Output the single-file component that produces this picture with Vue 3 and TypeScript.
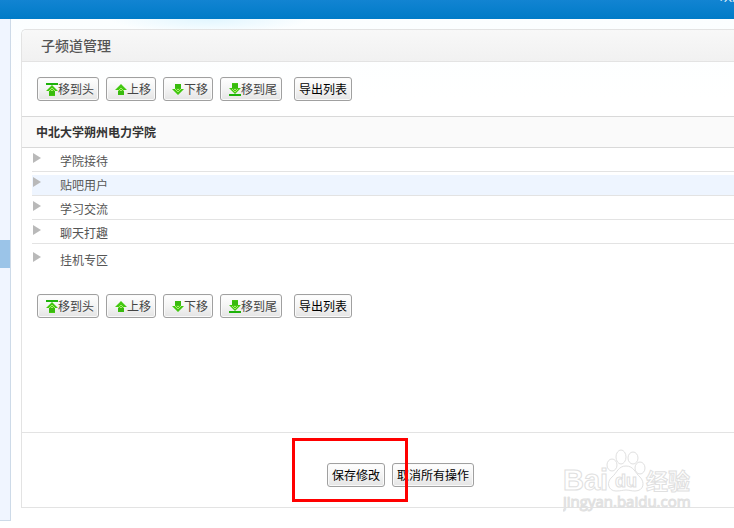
<script setup lang="ts">
import { ref } from 'vue'

type IconName = 'top' | 'up' | 'down' | 'bottom'

interface MoveAction {
  label: string
  icon: IconName
}

const moves: MoveAction[] = [
  { label: '移到头', icon: 'top' },
  { label: '上移', icon: 'up' },
  { label: '下移', icon: 'down' },
  { label: '移到尾', icon: 'bottom' },
]

const arrowPaths: Record<IconName, string> = {
  top: 'M6 2L12 8H9V13H3V8H0Z',
  up: 'M6 1L12 7H9V12H3V7H0Z',
  down: 'M3 1H9V6H12L6 12L0 6H3Z',
  bottom: 'M3 0H9V5H12L6 11L0 5H3Z',
}

const channels: string[] = ['学院接待', '贴吧用户', '学习交流', '聊天打趣', '挂机专区']
const toolbars: string[] = ['above', 'below']
const selected = ref(1)
</script>

<template>
  <div class="page">
    <header class="topbar"><span class="account">欢迎</span></header>
    <div class="body">
      <aside class="sidebar"><a class="current" href="#" aria-label="子频道管理"></a></aside>
      <main class="panel">
        <h1 class="title">子频道管理</h1>
        <template v-for="place in toolbars" :key="place">
          <div class="toolbar" :class="place">
            <button v-for="move in moves" :key="move.icon" type="button" class="btn move" :class="move.icon">
              <svg class="icon" viewBox="0 0 12 13" aria-hidden="true">
                <path :d="arrowPaths[move.icon]" fill="#43c811" />
                <template v-if="move.icon === 'top' || move.icon === 'up'">
                  <path d="M3 8H9V12H3Z" fill="#2aa50b" opacity="0.4" />
                  <path d="M5 5.5h2M3 7.5h1M5 7.5h2M8 7.5h1M4 6.5h1M7 6.5h1" stroke="#a5ec6c" />
                </template>
                <template v-else>
                  <path d="M3 1H9V5H3Z" fill="#2aa50b" opacity="0.4" />
                  <path d="M3 6.5h1M5 6.5h2M8 6.5h1M4 7.5h1M7 7.5h1M5 8.5h2" stroke="#a5ec6c" />
                </template>
                <path v-if="move.icon === 'top'" d="M0 1H12" stroke="#1db20a" stroke-width="2" />
                <path v-if="move.icon === 'bottom'" d="M0 12H12" stroke="#1db20a" stroke-width="2" />
              </svg>
              <span>{{ move.label }}</span>
            </button>
            <button type="button" class="btn export">导出列表</button>
          </div>
          <section v-if="place === 'above'">
            <h2 class="subtitle">中北大学朔州电力学院</h2>
            <ul class="channels">
              <li
                v-for="(channel, index) in channels"
                :key="channel"
                :class="{ selected: index === selected }"
                @click="selected = index"
              >
                <svg class="marker" viewBox="0 0 8 10" aria-hidden="true"><path d="M0 0L8 5L0 10Z" fill="#b9b9b9" /></svg>
                <span class="name">{{ channel }}</span>
              </li>
            </ul>
          </section>
        </template>
        <footer class="actions">
          <span class="save-wrap">
            <button type="button" class="btn">保存修改</button>
            <span class="highlight"></span>
          </span>
          <button type="button" class="btn">取消所有操作</button>
          <svg class="watermark" viewBox="0 0 136 68" role="img" aria-label="Baidu 经验">
            <g fill="#fff" stroke="#e0e0e0">
              <ellipse cx="49" cy="17" rx="5" ry="6" />
              <ellipse cx="58" cy="9" rx="5" ry="7" />
              <ellipse cx="70" cy="10" rx="5" ry="6" />
              <ellipse cx="77" cy="20" rx="5" ry="6" />
              <path d="M63 18C55 18 54 25 49 29C43 34 45 43 53 43C58 43 60 42 63 42C66 42 68 43 72 43C81 43 82 34 77 29C72 25 71 18 63 18Z" />
              <text class="latin" x="0" y="42" font-size="29">Bai</text>
              <text class="latin" x="52" y="39" font-size="18">du</text>
              <text class="han" x="83" y="41" font-size="22">经验</text>
              <text class="site" x="0" y="59" font-size="15">jingyan.baidu.com</text>
            </g>
          </svg>
        </footer>
      </main>
    </div>
  </div>
</template>

<style>
body {
  margin: 0;
  background: #fff;
}
</style>

<style scoped>
.page {
  overflow: hidden;
  font: 12px/16px "Noto Sans CJK SC", sans-serif;
  color: #555;
}
.topbar {
  height: 19px;
  background: linear-gradient(#1284d2, #007bc7);
  color: #fff;
  display: flex;
  justify-content: flex-end;
  overflow: hidden;
}
.account {
  margin: -12px -10px 0 0;
}
.body {
  display: flex;
  background: radial-gradient(ellipse 100px 14px at 210px 0, #e1f6ff, transparent), linear-gradient(#fbfeff, #fff 80px);
}
.sidebar {
  width: 10px;
  height: 501px;
  flex: none;
  background: #f0f5ff;
  border: solid #cddae8;
  border-width: 0 1px 1px 0;
}
.current {
  display: block;
  height: 28px;
  margin-top: 221px;
  background: #9bc4e8;
}
.panel {
  flex: 1;
  align-self: flex-start;
  margin: 10px 0 0 10px;
  border: 1px solid #e3e3e3;
  border-right: 0;
  border-top-left-radius: 5px;
}
.title {
  margin: 0;
  padding: 0 19px;
  height: 31px;
  border-bottom: 1px solid #e3e3e3;
  border-top-left-radius: 5px;
  background: linear-gradient(#f8f8f8, #f1f1f1);
  font-size: 14px;
  line-height: 30px;
  font-weight: 500;
}
.toolbar {
  display: flex;
  gap: 7px;
  padding: 15px;
}
.below {
  padding: 20px 15px 114px;
}
.btn {
  box-sizing: border-box;
  height: 24px;
  padding: 0 4px;
  border: 1px solid #a0a0a0;
  border-radius: 3px;
  background: linear-gradient(#fff, #f4f4f4 50%, #e4e4e4);
  box-shadow: inset 0 0 0 1px #fafafa;
  font: inherit;
  color: #000;
  white-space: nowrap;
}
.move {
  display: flex;
  align-items: center;
  justify-content: flex-end;
  width: 50px;
  color: #444;
}
.move.top,
.move.bottom {
  width: 62px;
}
.icon {
  width: 12px;
  height: 13px;
  flex: none;
}
.export {
  margin-left: 5px;
}
.subtitle {
  margin: 0;
  padding: 0 14px;
  border: solid #d9d9d9;
  border-width: 1px 0;
  background: #fafafa;
  font-size: 12px;
  line-height: 30px;
  color: #333;
}
.channels {
  list-style: none;
  margin: 0;
  padding: 3px 0 0 10px;
}
.channels li {
  display: flex;
  height: 20px;
  margin-bottom: 3px;
  border-bottom: 1px solid #e3e3e3;
}
.channels li:last-child {
  margin-top: 6px;
  border-bottom-color: transparent;
}
.channels .selected {
  background: #eef5ff;
}
.marker {
  width: 8px;
  height: 10px;
  margin: 2px 19px 0 1px;
}
.name {
  line-height: 20px;
}
.actions {
  position: relative;
  display: flex;
  gap: 7px;
  padding: 30px 15px 20px 305px;
  border-top: 1px solid #e3e3e3;
}
.save-wrap {
  position: relative;
}
.highlight {
  position: absolute;
  z-index: 1;
  top: -25px;
  left: -35px;
  width: 110px;
  height: 58px;
  border: 3px solid #f00;
  pointer-events: none;
}
.watermark {
  position: absolute;
  top: 15px;
  right: 35px;
  width: 136px;
  height: 68px;
}
.latin {
  font-family: "Liberation Sans", sans-serif;
  font-weight: 700;
}
.han {
  font-family: "Noto Sans CJK SC", sans-serif;
  font-weight: 700;
}
.site {
  font-family: "Open Sans", sans-serif;
  font-weight: 400;
}
</style>
